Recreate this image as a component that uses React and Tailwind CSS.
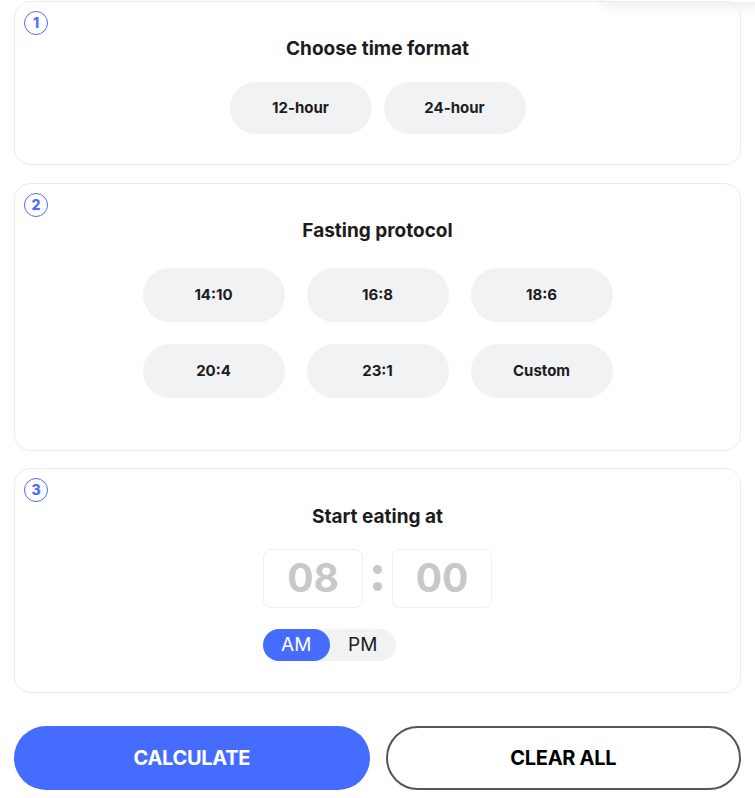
import { useState } from 'react';

function StepBadge({ n }) {
  return (
    <div className="absolute left-[9px] top-[9px] flex h-[24px] w-[24px] items-center justify-center rounded-full border-[1.5px] border-[#4d6ef5] text-[14px] font-extrabold leading-none text-[#4d6ef5]">
      {n}
    </div>
  );
}

function Pill({ children, tall }) {
  return (
    <button
      className={`flex w-[142px] items-center justify-center rounded-full bg-[#f1f2f4] text-[15px] font-bold text-[#1c1c1c] ${tall ? 'h-[54px]' : 'h-[52px]'}`}
    >
      {children}
    </button>
  );
}

export default function App() {
  const [ampm, setAmpm] = useState('AM');

  return (
    <div
      className="relative min-h-screen overflow-hidden bg-white px-[14px] pt-[1px]"
      style={{ fontFamily: 'Inter, "Noto Sans", sans-serif' }}
    >
      {/* dropdown peeking from above */}
      <div className="absolute right-[-10px] top-[-40px] h-[42px] w-[165px] rounded-[10px] bg-white shadow-[0_4px_14px_rgba(0,0,0,0.08)]"></div>

      {/* Step 1 */}
      <div className="relative h-[164px] rounded-[16px] border border-[#ececec] pt-[35px]">
        <StepBadge n="1" />
        <h2 className="text-center text-[19px] font-bold leading-[24px] text-[#1c1c1c]">Choose time format</h2>
        <div className="mt-[21px] flex justify-center gap-[12px]">
          <Pill>12-hour</Pill>
          <Pill>24-hour</Pill>
        </div>
      </div>

      {/* Step 2 */}
      <div className="relative mt-[18px] h-[268px] rounded-[16px] border border-[#ececec] pt-[35px]">
        <StepBadge n="2" />
        <h2 className="text-center text-[19px] font-bold leading-[24px] text-[#1c1c1c]">Fasting protocol</h2>
        <div className="mx-auto mt-[25px] grid w-[470px] grid-cols-3 gap-x-[22px] gap-y-[22px]">
          {['14:10', '16:8', '18:6', '20:4', '23:1', 'Custom'].map((p) => (
            <Pill key={p} tall>
              {p}
            </Pill>
          ))}
        </div>
      </div>

      {/* Step 3 */}
      <div className="relative mt-[17px] h-[225px] rounded-[16px] border border-[#ececec] pt-[36px]">
        <StepBadge n="3" />
        <h2 className="text-center text-[19px] font-bold leading-[24px] text-[#1c1c1c]">Start eating at</h2>
        <div className="mx-auto mt-[20px] w-[229px]">
          <div className="flex items-center justify-between">
            <div className="flex h-[59px] w-[100px] items-center justify-center rounded-[8px] border border-[#efefef] text-[39px] font-bold text-[#c8c8c8]">
              08
            </div>
            <div className="flex flex-col gap-[8px] pb-[2px]">
              <span className="h-[9px] w-[9px] rounded-full bg-[#c8c8c8]"></span>
              <span className="h-[9px] w-[9px] rounded-full bg-[#c8c8c8]"></span>
            </div>
            <div className="flex h-[59px] w-[100px] items-center justify-center rounded-[8px] border border-[#efefef] text-[39px] font-bold text-[#c8c8c8]">
              00
            </div>
          </div>
          <div className="mt-[21px] flex h-[32px] w-[133px] rounded-full bg-[#f1f2f4]">
            {['AM', 'PM'].map((v) => (
              <button
                key={v}
                onClick={() => setAmpm(v)}
                className={`flex h-full w-[67px] items-center justify-center rounded-full text-[19px] ${
                  ampm === v ? 'bg-[#456cff] text-white' : 'text-[#1c1c1c]'
                }`}
              >
                {v}
              </button>
            ))}
          </div>
        </div>
      </div>

      {/* Actions */}
      <div className="mt-[33px] grid grid-cols-2 gap-[16px]">
        <button className="h-[64px] rounded-full bg-[#456cff] text-[20px] font-bold tracking-[-0.3px] text-white">
          CALCULATE
        </button>
        <button className="h-[64px] rounded-full border-2 border-[#555] text-[20px] font-bold tracking-[-0.3px] text-black">
          CLEAR ALL
        </button>
      </div>
    </div>
  );
}
